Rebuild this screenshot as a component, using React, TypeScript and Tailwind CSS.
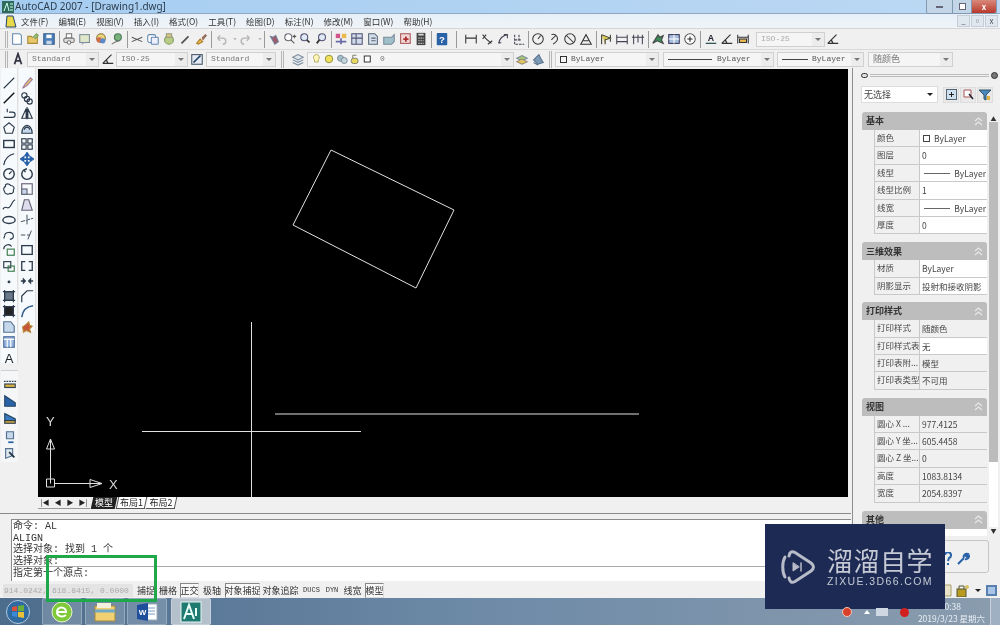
import React from "react";

const cjk = { fontFamily: '"Noto Sans CJK SC","Noto Sans",sans-serif' };
type N = React.ReactNode;

const Ic = ({ c, s = 14 }: { c: N; s?: number }) => (
  <span className="flex w-4 h-4 shrink-0 items-center justify-center">
    <svg viewBox="0 0 16 16" width={s} height={s} fill="none" strokeWidth="1.2">{c}</svg>
  </span>
);

const G = {
  newf: <path d="M3 2h8l2 2v10H3z" fill="#fff" stroke="#5f87ae" />,
  open: <><path d="M2 13V5h4l1 1h6v7z" fill="#e8c66a" stroke="#a88a3a" /><path d="M8 6l4-4 2 2-4 4" fill="#9cc67a" stroke="#7a9a5c" /></>,
  save: <><rect x="2" y="2" width="12" height="12" fill="#4f7fb8" stroke="#35608f" /><rect x="5" y="3" width="6" height="4" fill="#fff" /><rect x="5" y="10" width="6" height="4" fill="#c9d7e6" /></>,
  print: <><rect x="5" y="2" width="6" height="5" fill="#fff" stroke="#777" /><rect x="2" y="7" width="12" height="5" rx="2" fill="#ddd" stroke="#777" /><circle cx="8" cy="12" r="2" fill="#fff" stroke="#777" /></>,
  prev: <><rect x="2" y="3" width="11" height="9" fill="#dfe8c8" stroke="#7a8a9a" /><path d="M5 12l-1 3 4-3" fill="#9ab" /></>,
  pub: <><circle cx="8" cy="7" r="5" fill="#e9d27a" stroke="#8a7a3a" /><circle cx="6" cy="9" r="3" fill="#d06a4a" /><circle cx="10" cy="10" r="3" fill="#5a8ac8" /></>,
  plot: <><circle cx="9" cy="6" r="4" fill="#7ab07a" stroke="#4a7a5a" /><path d="M2 14c3-3 6-3 9-4" stroke="#777" /></>,
  cut: <path d="M2 6l12 5M2 11l12-5" stroke="#555" />,
  copy: <><rect x="2" y="3" width="9" height="9" rx="2" fill="#fff" stroke="#5f87ae" /><rect x="6" y="6" width="8" height="8" rx="1" fill="#eef" stroke="#5f87ae" /></>,
  paste: <><circle cx="8" cy="9" r="5" fill="#b8cc88" stroke="#7a9a5c" /><rect x="5" y="2" width="6" height="4" fill="#d8c87a" stroke="#998" /></>,
  brush: <path d="M4 13l8-8" stroke="#555" strokeWidth="2" />,
  match: <><path d="M3 13l4-5 3 3-5 3z" fill="#e8b84a" stroke="#a87a2a" /><path d="M9 7l4-4 1 1-4 5" fill="#c87a5a" stroke="#865" /></>,
  undo: <path d="M4 7h6a3 3 0 0 1 0 7M4 7l3-3M4 7l3 3" stroke="#b5b5b5" strokeWidth="1.6" />,
  redo: <path d="M12 7H6a3 3 0 0 0 0 7M12 7L9 4M12 7l-3 3" stroke="#b5b5b5" strokeWidth="1.6" />,
  dd: <path d="M6 7h4l-2 2z" fill="#a5a5a5" />,
  pan: <path d="M4 5l5 9 4-3-3-7-3 2z" fill="#a05a6a" stroke="#6f7f96" />,
  zr: <><circle cx="6" cy="6" r="4" fill="#fff" stroke="#6a6a7a" /><path d="M9 9l4 4M13 3v4M11 5h4" stroke="#555" /></>,
  zw: <><circle cx="6" cy="6" r="4" fill="#dfe9f5" stroke="#557" /><path d="M9 9l3 3" stroke="#333" strokeWidth="2" /></>,
  zp: <><circle cx="8" cy="6" r="4" fill="#dfe9f5" stroke="#557" /><path d="M5 9l-3 4" stroke="#333" strokeWidth="2" /></>,
  pal: <><rect x="2" y="2" width="5" height="5" fill="#d0568a" /><rect x="9" y="2" width="5" height="5" fill="#e8b84a" /><path d="M2 11h12M8 7v7" stroke="#6a6aa8" strokeWidth="2" /></>,
  grid: <><rect x="2" y="2" width="12" height="12" fill="#cfdbe9" stroke="#557" /><path d="M2 7h12M7 2v12" stroke="#557" /></>,
  sheet: <><path d="M3 2h7l3 3v9H3z" fill="#d5deea" stroke="#567" /><path d="M6 7h5M6 10h5" stroke="#567" /></>,
  mk: <><path d="M2 6h9l3-3v8l-3 3H2z" fill="#9fc0c8" stroke="#789" /></>,
  red: <><rect x="3" y="2" width="11" height="11" fill="#f0d8d8" stroke="#a55" /><path d="M6 8h6M9 5v6" stroke="#b03030" strokeWidth="2" /></>,
  calc: <><rect x="3" y="1" width="10" height="14" fill="#444" /><path d="M5 3h6" stroke="#ddd" strokeWidth="2" /><path d="M5 7h6M5 10h6M5 13h6" stroke="#ccc" strokeDasharray="1.5 1" /></>,
  help: <><rect x="2" y="1" width="12" height="14" rx="1" fill="#2a62a8" /><text x="8" y="12" textAnchor="middle" fontSize="11" fontWeight="700" fill="#fff" fontFamily="Liberation Sans">?</text></>,
  d1: <path d="M2 3v10M14 3v10M2 7h12" stroke="#333" />,
  d2: <path d="M3 3l4 5 6 5M3 8l4-5M9 14l5-4" stroke="#333" />,
  d3: <path d="M3 13C4 8 8 4 13 3M9 3h4v4M3 13l3-1" stroke="#445" />,
  d4: <path d="M3 3v11h11M3 9h8M8 3v8" stroke="#445" strokeDasharray="3 1" />,
  c1: <><circle cx="8" cy="8" r="6" stroke="#333" /><path d="M8 8l3-4" stroke="#333" /></>,
  c2: <path d="M5 3a5 5 0 0 1 7 5c0 3-3 4-5 6M5 9l5-5" stroke="#333" />,
  c3: <><circle cx="8" cy="8" r="6" stroke="#333" /><path d="M4 4l8 8" stroke="#333" /></>,
  c4: <path d="M2 14h12L8 3zM5 10h6" stroke="#333" />,
  e1: <path d="M3 3l10 4-6 2v5M3 3v11M13 3v8" stroke="#3a3a2a" fill="#d8c85a" />,
  e2: <path d="M2 3v11M14 3v11M2 6h12M2 11h12" stroke="#445" />,
  e3: <path d="M3 3v11M8 3v9M13 3v11M1 6h14" stroke="#445" />,
  f1: <path d="M2 13L8 3l2 3 4-2-2 5 2 4-7-3z" fill="#3c8a5a" stroke="#444" />,
  f2: <><rect x="2" y="3" width="12" height="10" fill="#a8c0e0" stroke="#335" /><path d="M2 8h12M8 3v10" stroke="#fff" /></>,
  f3: <><circle cx="8" cy="8" r="6" fill="#fff" stroke="#555" /><path d="M5 8h6M8 5v6" stroke="#222" /></>,
  g1: <><text x="8" y="10" textAnchor="middle" fontSize="10" fontWeight="700" fill="#223" fontFamily="Liberation Sans">A</text><path d="M2 13h12" stroke="#355" strokeWidth="1.5" /></>,
  g2: <path d="M2 13L12 3M2 13h12M8 13l-2-4" stroke="#333" strokeWidth="1.4" />,
  g3: <><path d="M2 3v10M14 3v10M2 6h12" stroke="#333" /><rect x="4" y="8" width="8" height="4" fill="#e8b84a" stroke="#333" /></>,
  stack: <path d="M2 6l6-3 6 3-6 3zM2 9l6 3 6-3M2 12l6 3 6-3" stroke="#7a8a9a" fill="#dde5ee" />,
  stack2: <path d="M3 9l6-6 3 6 2 3-6 2zM3 12l5 3" stroke="#59708a" fill="#7a9ab8" />,
  stack3: <><path d="M2 7l6-3 6 3-6 3z" fill="#a8c878" stroke="#789" /><path d="M2 11l6-3 6 3-6 3z" fill="#e0c860" stroke="#987" /></>,
  bulb: <path d="M8 2a4 4 0 0 1 3 7v3H6V9a4 4 0 0 1 2-7z" fill="#fff6b8" stroke="#b0a860" />,
  sun: <circle cx="8" cy="8" r="5" fill="#f0e05a" stroke="#8a8a3a" />,
  snow: <><circle cx="6" cy="7" r="4" fill="#a5c0c5" stroke="#789" /><circle cx="11" cy="10" r="4" fill="#c5d5da" stroke="#789" /></>,
  lock: <><rect x="3" y="7" width="9" height="7" rx="3" fill="#e8d860" stroke="#776" /><path d="M5 7V3h5" stroke="#776" /></>,
  sq: <rect x="3" y="4" width="8" height="8" fill="#fff" stroke="#222" />,
};

const Sep = ({ w = "w-1" }: { w?: string }) => (
  <span className={`${w} h-[17px] shrink-0 flex justify-center`}><span className="w-px h-full bg-[#9a9a9a]" /></span>
);
const Handle = () => <span className="w-[3px] h-[17px] shrink-0 border-x border-[#b5b5b5]" />;

const Combo = ({ w, children, text = "text-[#777]" }: { w: string; children?: N; text?: string }) => (
  <span className={`${w} h-[15px] shrink-0 flex items-center bg-[#f5f5f5] border border-[#d0d0d0] pl-1 overflow-hidden text-[8px] ${text}`} style={{ fontFamily: '"Liberation Mono","Noto Sans CJK SC",monospace' }}>
    <span className="flex-1 flex items-center gap-1 whitespace-nowrap">{children}</span>
    <span className="w-3 h-full flex items-center justify-center bg-[#ececec]"><span className="w-0 h-0 border-x-[3px] border-x-transparent border-t-[3px] border-t-[#777]" /></span>
  </span>
);

const L = ({ c }: { c: N }) => (
  <span className="flex h-[15.25px] w-full items-center justify-center shrink-0">
    <svg viewBox="0 0 16 16" width="14" height="14" fill="none" stroke="#2c3a4a" strokeWidth="1.3">{c}</svg>
  </span>
);

const col1: N[] = [
  <path d="M2 14L14 2" />, <path d="M2 14L14 2" stroke="#111" strokeWidth="1.6" />, <path d="M2 13h10a3 3 0 0 0 0-6H8M6 3v4" />,
  <path d="M8 2l6 5-2 7H4L2 7z" />, <rect x="2" y="4" width="12" height="8" strokeWidth="1.6" />, <path d="M2 15C3 8 8 3 14 2" />,
  <><circle cx="8" cy="8" r="6" strokeWidth="1.6" /><path d="M8 8l3-3" /></>, <path d="M4 3c3-2 5 0 6 1 3 0 5 3 3 5 1 3-2 5-4 4-3 2-6 0-6-2-2-2-1-5 1-6z" />,
  <path d="M1 13c3-6 5 1 8-3s3-7 6-8" />, <ellipse cx="8" cy="8" rx="7" ry="4" strokeWidth="1.6" />, <path d="M3 9a5 4 0 1 1 6 4M3 9l-1 3" />,
  <><rect x="6" y="7" width="8" height="7" stroke="#3a7a4a" /><path d="M2 7a5 5 0 0 1 9-3" /></>, <><rect x="2" y="3" width="8" height="7" /><rect x="7" y="8" width="7" height="6" stroke="#3a7a4a" /></>,
  <circle cx="8" cy="9" r="1" fill="#333" />, <><rect x="3" y="3" width="10" height="10" fill="#6a7a8a" /><path d="M1 3h14M1 13h14M3 1v14M13 1v14" /></>,
  <><rect x="3" y="3" width="10" height="10" fill="#222" /><path d="M1 3h14M1 13h14M3 1v14M13 1v14" /></>, <path d="M2 2h8l4 5v7H2z" fill="#c5d8ec" stroke="#56708f" />,
  <><rect x="2" y="2" width="12" height="12" fill="#9ab8de" stroke="#4a6a9a" /><path d="M2 5h12M6 5v9M10 5v9" stroke="#fff" /></>,
];
const col2: N[] = [
  <path d="M3 14l3-5 6-7 2 2-6 7z" fill="#e8c66a" stroke="#a07aa0" />, <><circle cx="5" cy="5" r="3" /><circle cx="8" cy="9" r="3" /><circle cx="11" cy="12" r="3" /></>,
  <path d="M7 3v11H2zM9 3v11h5zM8 1v14" />, <><path d="M2 14c0-5 3-9 6-9s6 4 6 9z" fill="#c5d8ec" /><path d="M5 10c0-2 2-3 3-3s3 1 3 3" /></>,
  <><rect x="2" y="2" width="5" height="5" /><rect x="9" y="2" width="5" height="5" /><rect x="2" y="9" width="5" height="5" /><rect x="9" y="9" width="5" height="5" /></>,
  <path d="M8 1v14M1 8h14M8 1L6 4h4zM8 15l-2-3h4zM1 8l3-2v4zM15 8l-3-2v4z" stroke="#2a62a8" strokeWidth="2" />,
  <path d="M11 3a6 6 0 1 1-6 0M5 3l3-1M5 3l1 3" strokeWidth="1.6" />, <><rect x="2" y="2" width="12" height="12" stroke="#667" /><rect x="2" y="8" width="6" height="6" stroke="#667" fill="#c5d8ec" /></>,
  <path d="M2 14h12L10 2H5z" stroke="#667" fill="#dde" />, <path d="M1 10L15 6M8 2v12" strokeWidth="1" strokeDasharray="5 1" />,
  <path d="M1 8h5M8 8h3M13 3L9 13" strokeWidth="1" />, <rect x="2" y="3" width="12" height="10" strokeWidth="1.5" />,
  <path d="M6 3H2v10h4M10 3h4v10h-4" strokeWidth="1.5" />, <path d="M1 8h5M10 8h5M6 8L4 6v4zM10 8l2-2v4z" strokeWidth="1.6" />,
  <path d="M2 15V8l6-6h7" strokeWidth="1.4" />, <path d="M2 15C3 7 7 3 15 2" strokeWidth="1.8" stroke="#35608f" />,
  <path d="M3 8l4-3 3-3 1 4 3 1-3 3 1 4-5-2-3 2z" fill="#c8563a" stroke="#b88a3a" />,
];

const Row = ({ k, v, white = true }: { k: string; v: N; white?: boolean }) => (
  <div className="flex h-[17.4px] border-b border-[#c9c9c9]">
    <div className="w-[45px] shrink-0 border-r border-[#c9c9c9] pl-[2px] text-[#4a4a4a] whitespace-nowrap overflow-hidden leading-[15px]">{k}</div>
    <div className={`flex-1 pl-[2px] text-[#444] whitespace-nowrap overflow-hidden leading-[17px] ${white ? "bg-white" : ""}`}>{v}</div>
  </div>
);
const LineV = ({ w = "w-[26px]" }: { w?: string }) => (
  <span className="flex items-center justify-end gap-1 pr-[1px]"><span className={`${w} h-px bg-[#666]`} />ByLayer</span>
);
const Section = ({ title, mb, children }: { title: string; mb: string; children: N }) => (
  <div className={`w-[125px] ml-[9px] ${mb}`}>
    <div className="h-[18px] bg-[#bdbdbd] rounded-t-[3px] flex items-center justify-between pl-[4px] pr-[4px] text-[9px] font-bold text-[#333]">
      <span>{title}</span>
      <svg width="9" height="9" viewBox="0 0 9 9" fill="none" stroke="#e8e8e8" strokeWidth="1.2"><path d="M1 4l3.5-3L8 4M1 8l3.5-3L8 8" /></svg>
    </div>
    <div className="ml-[12px] border-l border-[#c9c9c9]">{children}</div>
  </div>
);

const Stat = ({ t, w, on, mono }: { t: string; w: string; on?: boolean; mono?: boolean }) => (
  <span className={`${w} shrink-0 h-[15px] flex items-center justify-center text-[#333] whitespace-nowrap ${on ? "border border-[#888] border-r-[#ddd] border-b-[#ddd] bg-[#f8f8f8]" : ""} ${mono ? "text-[7px]" : "text-[9px]"}`} style={mono ? { fontFamily: '"Liberation Mono",monospace' } : undefined}>{t}</span>
);

const Task = ({ active, children }: { active?: boolean; children: N }) => (
  <span className={`w-10 h-[27px] shrink-0 flex items-center justify-center border border-[#ffffff40] rounded-[2px] ${active ? "bg-[#b4c0cc]" : "bg-[#ffffff2e]"}`}>{children}</span>
);

export default function App() {
  return (
    <div className="w-[1000px] h-[625px] relative overflow-hidden flex flex-col bg-[#f0f0f0] text-[#222] blur-[0.4px]" style={cjk}>
      {/* title bar */}
      <div className="h-[14px] shrink-0 flex items-center bg-gradient-to-r from-[#a5cdf1] to-[#bcd8f3] border-b border-[#8fa9c2]">
        <svg width="12" height="12" viewBox="0 0 12 12" className="ml-[2px] mr-[1px]"><rect width="12" height="12" fill="#2f6b5a" /><path d="M2 10L5 2l2 8M8 3h3M8 6h3M8 9h3" stroke="#cfe" fill="none" /></svg>
        <span className="text-[10px] text-[#2d3d4d] whitespace-nowrap" style={{ fontFamily: '"Noto Sans",sans-serif' }}>AutoCAD 2007 - [Drawing1.dwg]</span>
        <div className="ml-auto mr-[3px] flex h-[14px] w-[71px] self-start rounded-b-[3px] border border-[#8199b0] border-t-0 overflow-hidden">
          <span className="w-[25px] flex items-center justify-center bg-[#c3d6e8]"><span className="w-[7px] h-[2px] bg-white border-[0.5px] border-[#667]" /></span>
          <span className="w-[20px] flex items-center justify-center bg-[#c3d6e8] border-x border-[#8199b0]"><span className="w-[7px] h-[7px] border border-[#667] bg-white" /></span>
          <span className="flex-1 flex items-center justify-center bg-gradient-to-b from-[#d8887a] to-[#b8362a] text-white text-[8px] font-bold leading-none">x</span>
        </div>
      </div>
      {/* menu bar */}
      <div className="h-[14px] shrink-0 flex items-center bg-gradient-to-b from-[#e6eff8] to-[#f0f4f8] text-[8.500px] text-[#333] pl-[4px]">
        <svg width="14" height="13" viewBox="0 0 14 13" className="mr-[3px]"><path d="M3 1h6l3 11H2z" fill="#e8d84a" stroke="#246" /></svg>
        <div className="flex gap-[10px] whitespace-nowrap">
          {["文件(F)", "编辑(E)", "视图(V)", "插入(I)", "格式(O)", "工具(T)", "绘图(D)", "标注(N)", "修改(M)", "窗口(W)", "帮助(H)"].map((m) => <span key={m}>{m}</span>)}
        </div>
        <div className="ml-auto mr-[2px] flex gap-[1px] text-[8px] text-[#556] leading-none">
          {["_", "▫", "x"].map((b) => <span key={b} className="w-[13px] h-[12px] flex items-center justify-center bg-[#dfe7ef] border border-[#c5ced7]">{b}</span>)}
        </div>
      </div>
      {/* toolbar 1 */}
      <div className="h-[21px] shrink-0 flex items-center pl-[5px] border-t border-[#d5d5d5]">
        <Handle /><span className="w-px" />
        <Ic c={G.newf} /><Ic c={G.open} /><Ic c={G.save} /><Sep />
        <Ic c={G.print} /><Ic c={G.prev} /><Ic c={G.pub} /><Ic c={G.plot} /><Sep />
        <Ic c={G.cut} /><Ic c={G.copy} /><Ic c={G.paste} /><Ic c={G.brush} /><Ic c={G.match} /><Sep />
        <Ic c={G.undo} /><span className="w-[13px] -mx-[2px]"><Ic c={G.dd} /></span><Ic c={G.redo} /><span className="w-[13px] -mx-[2px]"><Ic c={G.dd} /></span><Sep w="w-[3px]" />
        <Ic c={G.pan} /><Ic c={G.zr} /><Ic c={G.zw} /><Ic c={G.zp} /><Sep w="w-[3px]" />
        <Ic c={G.pal} /><Ic c={G.grid} /><Ic c={G.sheet} /><Ic c={G.mk} /><Ic c={G.red} /><Ic c={G.calc} /><Sep w="w-[5px]" />
        <Ic c={G.help} /><Sep w="w-[13px]" />
        <Ic c={G.d1} /><Ic c={G.d2} /><Ic c={G.d3} /><Ic c={G.d4} /><Sep w="w-[3px]" />
        <Ic c={G.c1} /><Ic c={G.c2} /><Ic c={G.c3} /><Ic c={G.c4} /><Sep />
        <Ic c={G.e1} /><Ic c={G.e2} /><Ic c={G.e3} /><Sep />
        <Ic c={G.f1} /><Ic c={G.f2} /><Ic c={G.f3} /><Sep w="w-[5px]" />
        <Ic c={G.g1} /><Ic c={G.g2} /><Ic c={G.g3} /><span className="w-[5px]" />
        <Combo w="w-[69px]" text="text-[#aaa]">ISO-25</Combo>
        <Ic c={G.g2} />
      </div>
      {/* toolbar 2 */}
      <div className="h-[19px] shrink-0 flex items-center pl-[5px] border-t border-[#d9d9d9]">
        <Handle />
        <span className="w-[2px]" /><Ic c={<path d="M4 14L8 2l4 12M5 10h6" stroke="#334" strokeWidth="2" />} />
        <span className="w-[1px]" /><Combo w="w-[72px]">Standard</Combo><span className="w-[1px]" />
        <Ic c={G.g2} /><Combo w="w-[72px]">ISO-25</Combo><span className="w-[1px]" />
        <Ic c={<><rect x="2" y="3" width="12" height="11" fill="#e5e9f3" stroke="#456" /><path d="M4 12L12 4" stroke="#246" strokeWidth="2" /></>} />
        <span className="w-[1px]" /><Combo w="w-[70px]">Standard</Combo>
        <span className="w-[5px]" /><Handle /><span className="w-[6px]" />
        <Ic c={G.stack} /><span className="w-[1px]" />
        <Combo w="w-[207px]"><span className="flex items-center -ml-[4px] -space-x-[3px]"><Ic c={G.bulb} s={12} /><Ic c={G.sun} s={12} /><Ic c={G.snow} s={12} /><Ic c={G.lock} s={12} /><Ic c={G.sq} s={12} /></span><span>0</span></Combo>
        <Ic c={G.stack3} /><Ic c={G.stack2} />
        <span className="w-[3px]" /><Handle /><span className="w-[3px]" />
        <Combo w="w-[104px]" text="text-[#555]"><span className="w-[7px] h-[7px] border border-[#333]" />ByLayer</Combo><span className="w-[4px]" />
        <Combo w="w-[111px]" text="text-[#555]"><span className="w-[44px] h-px bg-[#444]" /><span className="ml-[1px]">ByLayer</span></Combo><span className="w-[3px]" />
        <Combo w="w-[87px]" text="text-[#555]"><span className="w-[26px] h-px bg-[#444]" /><span>ByLayer</span></Combo><span className="w-[4px]" />
        <Combo w="w-[85px]" text="text-[#777]"><span className="text-[9px]" style={cjk}>随颜色</span></Combo>
      </div>
      {/* main */}
      <div className="h-[515px] shrink-0 flex">
        <div className="w-[851px] shrink-0 flex flex-col">
          <div className="h-[429px] shrink-0 flex">
            <div className="w-[38px] shrink-0 flex flex-col">
              <div className="flex">
                <div className="w-[17px] ml-[1px] h-[295px] bg-[#f7fafd] flex flex-col pt-[7px] border-r border-[#e0e0e0]">
                  {col1.map((c, i) => <L key={i} c={c} />)}
                  <span className="h-[15px] mt-[2px] flex items-center justify-center text-[13px] text-[#222] leading-none" style={{ fontFamily: '"Liberation Sans",sans-serif' }}>A</span>
                </div>
                <div className="w-[17px] ml-[1px] h-[263px] bg-[#f7fafd] flex flex-col pt-[7px] border-r border-[#e0e0e0]">
                  {col2.map((c, i) => <L key={i} c={c} />)}
                </div>
              </div>
              <div className="w-[17px] ml-[1px] mt-[7px] h-[92px] flex flex-col items-center border-t border-[#cfcfcf] pt-[5px] bg-[#f4f6f8]">
                <L c={<><path d="M1 5h14" stroke="#345" strokeDasharray="2 1" /><rect x="2" y="8" width="12" height="4" fill="#d8b040" stroke="#345" /></>} />
                <span className="h-[2px]" />
                <L c={<path d="M2 2l12 8v4H2z" fill="#2a62a8" stroke="#246" />} />
                <span className="h-[2px]" />
                <L c={<><path d="M2 3l12 6v2H2z" fill="#3a7ac0" stroke="#246" /><rect x="2" y="11" width="12" height="3" fill="#d8b040" /></>} />
                <span className="h-[4px]" />
                <L c={<><path d="M4 2h8v8H4z" fill="#c5d8ec" stroke="#56708f" /><path d="M6 14h6" stroke="#2a62a8" strokeWidth="2" /></>} />
                <L c={<><path d="M3 14L3 3h8v8z" fill="#dde8f0" stroke="#56708f" /><path d="M7 7l6 6" stroke="#234" strokeWidth="2" /></>} />
              </div>
            </div>
            <div className="w-[810px] shrink-0 h-[428px] mt-px bg-black">
              <svg viewBox="0 0 810 428" width="810" height="428" fill="none" stroke="#e0e0e0" strokeWidth="1">
                <path d="M293 81L416 141L378 219L255 156Z" />
                <path d="M213.500 253V428M104 362.500H323M237 345H601" />
                <path d="M12.500 414.500V370M12.500 370l-4 10h8zM8.500 410h8v8h-8zM17 414.500H64M64 414.500l-12-4v8z" />
                <text x="8" y="357" fontSize="13" fill="#d9d9d9" stroke="none" fontFamily="Liberation Sans">Y</text>
                <text x="71" y="420" fontSize="13" fill="#d9d9d9" stroke="none" fontFamily="Liberation Sans">X</text>
              </svg>
            </div>
          </div>
          {/* tabs */}
          <div className="h-[14px] shrink-0 flex items-start pl-[38px]">
            <div className="w-[52px] h-[12px] flex items-center justify-around border-b border-[#999] text-[#222] text-[7px] leading-none">
              {["|◀", "◀", "▶", "▶|"].map((b) => <span key={b}>{b}</span>)}
            </div>
            <span className="w-[24px] h-[12px] ml-[2px] bg-[#222] text-white text-[9px] leading-[12px] text-center -skew-x-12"><span className="block skew-x-12">模型</span></span>
            <span className="w-[29px] h-[12px] ml-[1px] border-x border-b border-[#555] bg-white text-[9px] leading-[11px] text-center -skew-x-12"><span className="block skew-x-12">布局1</span></span>
            <span className="w-[29px] h-[12px] ml-[1px] border-r border-b border-[#555] bg-white text-[9px] leading-[11px] text-center -skew-x-12"><span className="block skew-x-12">布局2</span></span>
          </div>
          {/* command */}
          <div className="h-[72px] shrink-0 flex flex-col pl-[8px]">
            <div className="h-[6px] -ml-[8px] border-t border-[#8a8a8a] mt-[2px] shrink-0" />
            <div className="flex-1 flex flex-col ml-[3px] bg-white border-l border-t border-[#8a8a8a] text-[10px] text-[#333] pl-[1px]" style={{ fontFamily: '"Liberation Mono","Noto Sans CJK SC",monospace' }}>
              <div className="h-[46px] overflow-hidden leading-[11.500px] pt-[1px] whitespace-pre">
                <div>命令: AL</div><div>ALIGN</div><div>选择对象: 找到 1 个</div><div>选择对象:</div>
              </div>
              <div className="flex-1 border-t border-[#aaa] leading-[14px] whitespace-pre">指定第一个源点:</div>
            </div>
            <div className="h-[4px] shrink-0" />
          </div>
        </div>
        {/* properties */}
        <div className="flex-1 border-l border-[#8f8f8f] ml-px flex flex-col relative text-[8.500px]">
          <div className="h-[14px] shrink-0 flex items-center pl-[8px] pr-[2px] gap-[2px]">
            <span className="w-[7px] h-[5px] rounded-full border border-[#333] bg-[#ddd]" />
            <span className="flex-1 h-[3px] border-y border-[#bbb]" />
            <span className="w-[7px] h-[7px] rounded-full bg-[#777] border border-[#333]" />
          </div>
          <div className="h-[19px] mt-[3px] shrink-0 flex items-center pl-[8px] text-[9px]">
            <span className="w-[77px] h-[17px] bg-white border border-[#ddd] flex items-center justify-between px-[2px]"><span className="text-[#444]">无选择</span><span className="w-0 h-0 border-x-[3px] border-x-transparent border-t-[3px] border-t-[#222] mr-[2px]" /></span>
            <span className="w-[16px] h-[16px] ml-[5px] flex items-center justify-center bg-[#e9e9e9] border border-[#ddd]"><svg width="11" height="11" viewBox="0 0 11 11"><rect x=".5" y=".5" width="10" height="10" fill="#cfe0ee" stroke="#567" /><path d="M3 5.500h5M5.500 3v5" stroke="#222" /></svg></span>
            <span className="w-[16px] h-[16px] ml-[1px] flex items-center justify-center bg-[#e9e9e9] border border-[#ddd]"><svg width="11" height="11" viewBox="0 0 11 11" fill="none"><path d="M1 1h7v7H1z" fill="#fff" stroke="#a55" /><path d="M6 5l4 5" stroke="#223" strokeWidth="1.5" /></svg></span>
            <span className="w-[16px] h-[16px] ml-[1px] flex items-center justify-center bg-[#e9e9e9] border border-[#ddd]"><svg width="12" height="12" viewBox="0 0 12 12"><path d="M0 1h12L7 6v5L5 10V6z" fill="#4a86c0" stroke="#356" /><path d="M8 7h3v4H8z" fill="#e0b040" /></svg></span>
          </div>
          <div className="mt-[8px] flex flex-col">
            <Section title="基本" mb="mb-[8px]">
              <Row k="颜色" v={<span className="flex items-center gap-[4px] pl-[1px]"><span className="w-[7px] h-[7px] border border-[#444]" />ByLayer</span>} />
              <Row k="图层" v="0" />
              <Row k="线型" v={<LineV />} />
              <Row k="线型比例" v="1" />
              <Row k="线宽" v={<LineV />} />
              <Row k="厚度" v="0" />
            </Section>
            <Section title="三维效果" mb="mb-[7px]">
              <Row k="材质" v="ByLayer" />
              <Row k="阴影显示" v="投射和接收阴影" />
            </Section>
            <Section title="打印样式" mb="mb-[8px]">
              <Row k="打印样式" v="随颜色" white={false} />
              <Row k="打印样式表" v="无" />
              <Row k="打印表附..." v="模型" white={false} />
              <Row k="打印表类型" v="不可用" white={false} />
            </Section>
            <Section title="视图" mb="mb-[8px]">
              <Row k="圆心 X ..." v="977.4125" white={false} />
              <Row k="圆心 Y 坐..." v="605.4458" white={false} />
              <Row k="圆心 Z 坐..." v="0" white={false} />
              <Row k="高度" v="1083.8134" white={false} />
              <Row k="宽度" v="2054.8397" white={false} />
            </Section>
            <Section title="其他" mb="mb-0">
              <div className="h-[7px] bg-white" />
            </Section>
            <div className="mt-[4px] ml-[3px] w-[133px] h-[33px] border border-[#c5c5c5] rounded-[3px] flex items-center justify-end gap-[1px] pr-[18px] pt-[5px]">
              <svg width="14" height="14" viewBox="0 0 14 14" fill="none" stroke="#2a62a8" strokeWidth="2"><path d="M4 3a3 3 0 1 1 4 3L7 9M7 11v2" /></svg>
              <svg width="14" height="14" viewBox="0 0 14 14" fill="none" stroke="#2a62a8" strokeWidth="2"><path d="M2 12l6-6M8 6a3 3 0 0 1 4-4L10 4l1 1 2-1a3 3 0 0 1-4 3" /></svg>
            </div>
          </div>
          <div className="absolute right-[2px] top-[47px] w-[9px] h-[420px] flex flex-col">
            <span className="h-[7px] text-[6px] leading-[7px] text-center text-[#333]">▲</span>
            <span className="h-[340px] bg-[#bcbcbc]" />
            <span className="flex-1 bg-white" />
            <span className="h-[8px] text-[6px] leading-[8px] text-center text-[#333]">▼</span>
          </div>
        </div>
      </div>
      {/* status bar */}
      <div className="h-[15px] shrink-0 flex items-center pl-[3px] bg-[#f0f0f0]">
        <span className="w-[130px] h-[13px] shrink-0 bg-[#e4e4e4] text-[#aaa] text-[8px] leading-[13px] pl-[1px] whitespace-nowrap overflow-hidden" style={{ fontFamily: '"Liberation Mono",monospace' }}>914.0242, 618.8415, 0.0000</span>
        <span className="w-[4px]" />
        <Stat t="捕捉" w="w-[18px]" /><span className="w-[5px]" />
        <Stat t="栅格" w="w-[16px]" /><span className="w-[4px]" />
        <Stat t="正交" w="w-[19px]" on /><span className="w-[4px]" />
        <Stat t="极轴" w="w-[18px]" /><span className="w-[4px]" />
        <Stat t="对象捕捉" w="w-[35px]" on /><span className="w-[3px]" />
        <Stat t="对象追踪" w="w-[35px]" /><span className="w-[5px]" />
        <Stat t="DUCS" w="w-[17px]" mono /><span className="w-[5px]" />
        <Stat t="DYN" w="w-[14px]" mono /><span className="w-[5px]" />
        <Stat t="线宽" w="w-[17px]" /><span className="w-[4px]" />
        <Stat t="模型" w="w-[19px]" on />
        <div className="ml-auto flex items-center gap-[3px] pr-[3px]">
          <svg width="11" height="13" viewBox="0 0 11 13"><path d="M2 1h7v11H2z" fill="#e8e2c8" stroke="#a8a070" /></svg>
          <svg width="14" height="13" viewBox="0 0 14 13"><rect x="1" y="5" width="9" height="8" fill="#b89a20" stroke="#553" /><path d="M3 5V2h5v3" fill="none" stroke="#553" /><circle cx="11" cy="3" r="2" fill="#d8c060" /></svg>
          <span className="w-0 h-0 border-x-[3px] border-x-transparent border-t-[3px] border-t-[#222] mx-[2px]" />
          <span className="w-[11px] h-[11px] bg-[#a8c4e8] border-2 border-[#5a80b0]" />
        </div>
      </div>
      {/* taskbar */}
      <div className="h-[27px] shrink-0 flex items-center bg-gradient-to-r from-[#4d6d8d] via-[#6f8ba8] to-[#8a9cae] pl-[6px]">
        <svg width="24" height="24" viewBox="0 0 24 24" className="mr-[12px]"><circle cx="12" cy="12" r="11.500" fill="#2f6ba0" stroke="#b5c8da" /><path d="M6 7l5-1v5H6z" fill="#d8503a" /><path d="M12 6l6-1v6h-6z" fill="#6aae3a" /><path d="M6 12h5v5l-5-1z" fill="#3a8ad8" /><path d="M12 12h6v6l-6-1z" fill="#e8c03a" /></svg>
        <Task><svg width="26" height="24" viewBox="0 0 26 24"><circle cx="13" cy="12" r="10" fill="#7ec83a" stroke="#e8f5d0" /><path d="M8 12h9a4.500 4.500 0 0 0-9 0c0 4 5 6 9 3" fill="none" stroke="#fff" strokeWidth="2" /></svg></Task>
        <span className="w-[3px]" />
        <Task><svg width="26" height="22" viewBox="0 0 26 22"><path d="M3 5h20v15H3z" fill="#f0d070" stroke="#a8893a" /><path d="M5 2h14v5H5z" fill="#f5f0dc" /><path d="M3 10h20" stroke="#70a8c8" strokeWidth="3" /></svg></Task>
        <span className="w-[2px]" />
        <Task><svg width="24" height="22" viewBox="0 0 24 22"><path d="M10 3h12v16H10z" fill="#fff" stroke="#9ab" /><path d="M13 7h7M13 10h7M13 13h7" stroke="#7a9ac8" /><path d="M2 4l11-2v18L2 18z" fill="#1f4e9a" /><text x="7.500" y="14" fontSize="8" textAnchor="middle" fill="#fff" fontWeight="700" fontFamily="Liberation Sans">W</text></svg></Task>
        <span className="w-[4px]" />
        <Task active><svg width="24" height="24" viewBox="0 0 24 24"><rect x="2" y="2" width="20" height="20" fill="#1f7a72" stroke="#e8f5f0" /><path d="M5 19L10 5l5 14M7 14h6M17 8v8" fill="none" stroke="#e8fff8" strokeWidth="2" /></svg></Task>
        <div className="ml-auto flex flex-col items-end text-[8.500px] text-[#e8eef4] leading-[12px] pr-[5px]">
          <span className="mr-[24px]">0:38</span>
          <span className="whitespace-nowrap">2019/3/23 星期六</span>
        </div>
        <span className="w-[10px] h-full border-l border-[#ccd] bg-[#9fb0c2]" />
      </div>
      {/* overlays */}
      <div className="absolute left-[46px] top-[555px] w-[111px] h-[47px] border-[3px] border-[#1fa84a]" />
      <div className="absolute left-[765px] top-[524px] w-[180px] h-[85px] bg-[#1d2b54] flex items-center text-[#c5c9d4]">
        <svg width="36" height="36" viewBox="0 0 36 36" fill="none" stroke="#b8bcc8" strokeLinecap="round" className="ml-[15px] shrink-0">
          <path d="M5 8C2 13 2 23 5 28" strokeWidth="3" />
          <path d="M9 7Q10 1 15 3.500L31 14Q36 18 31 22L15 32.500Q10 35 9 29" strokeWidth="3" />
          <path d="M13 14v8l6-4z" fill="#b8bcc8" strokeWidth="1" />
          <path d="M21 14v8" strokeWidth="1.500" />
        </svg>
        <div className="ml-[11px] flex flex-col items-start leading-none">
          <span className="text-[26px] tracking-[0.5px] whitespace-nowrap">溜溜自学</span>
          <span className="text-[10.500px] tracking-[1.4px] mt-[3px] whitespace-nowrap" style={{ fontFamily: '"Liberation Sans",sans-serif' }}>ZIXUE.3D66.COM</span>
        </div>
      </div>
      {/* tray */}
      <div className="absolute left-[842px] top-[607px] flex items-center gap-[6px]">
        <span className="w-[10px] h-[10px] rounded-full bg-[#d8402a] border border-[#f5c8b8]" />
        <span className="w-0 h-0 border-x-[3px] border-x-transparent border-b-[4px] border-b-white ml-[6px]" />
        <span className="w-[12px] h-[8px] bg-[#cfd8e2]" />
        <span className="w-[9px] h-[9px] rounded-full bg-[#d02020] ml-[6px]" />
      </div>
    </div>
  );
}
